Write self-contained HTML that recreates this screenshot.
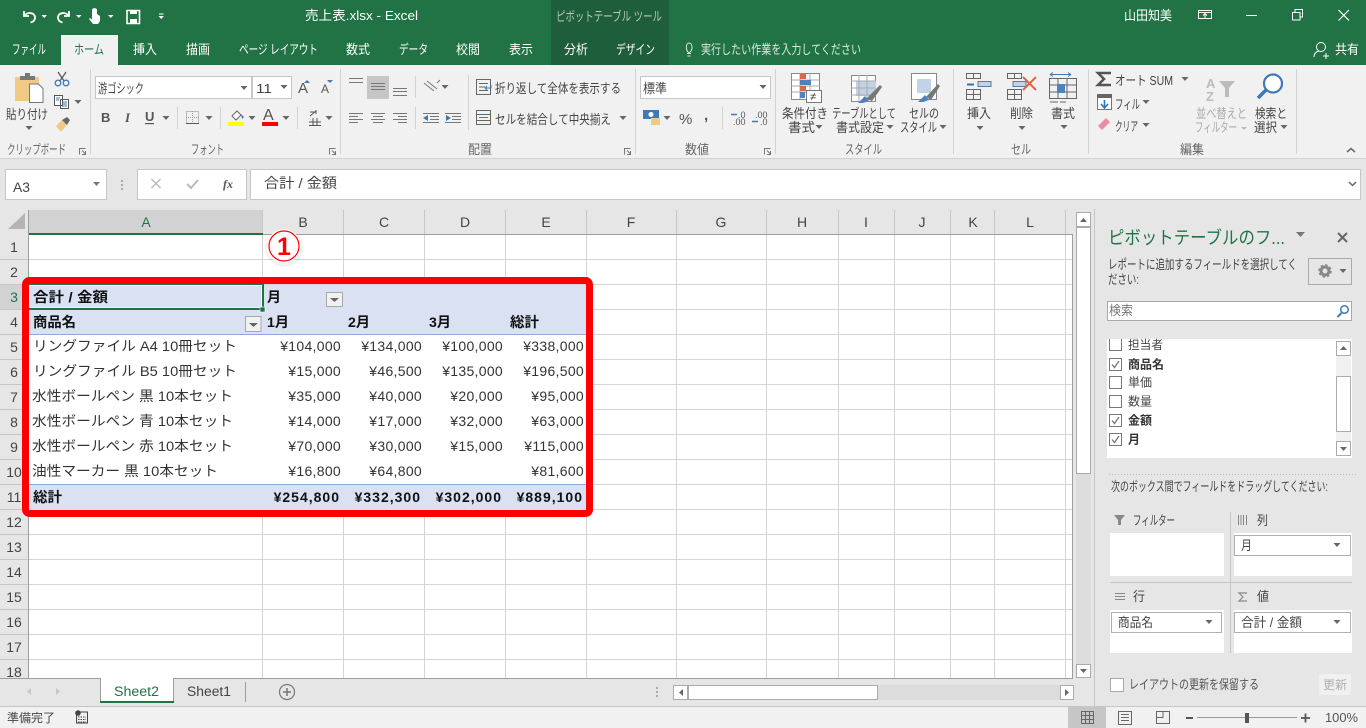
<!DOCTYPE html>
<html lang="ja"><head><meta charset="utf-8"><title>売上表.xlsx - Excel</title>
<style>
html,body{margin:0;padding:0;width:1366px;height:728px;overflow:hidden;background:#e6e6e6}
svg{display:block;font-family:"Liberation Sans","Noto Sans CJK JP",sans-serif;font-size:12px}
.w text{fill:#fff;font-size:13px}
.r text{fill:#444}
.l text{fill:#444;font-size:13px}
.c text{fill:#333;font-size:14px}
.b text{font-weight:700;fill:#111;font-size:14px}
.n text{font-size:14px;fill:#333;text-anchor:end}
.nb text{font-size:14px;fill:#111;font-weight:700;text-anchor:end}
.h text{font-size:14px;fill:#444;text-anchor:middle}
</style></head><body>
<svg width="1366" height="728" viewBox="0 0 1366 728" xmlns="http://www.w3.org/2000/svg">
<defs>
<polygon id="d" points="-3.5,-2 3.500,-2 0,2" fill="#666"/>
<g id="chk"><rect x=".5" y=".5" width="12" height="12" fill="#fff" stroke="#777"/></g>
<g id="chk2"><rect x=".5" y=".5" width="12" height="12" fill="#fff" stroke="#777"/><path d="M3 6.500l2.500 3L10 3" fill="none" stroke="#777" stroke-width="1.300"/></g>
</defs>

<!-- title bar -->
<rect width="1366" height="65" fill="#217346"/>
<rect x="551" width="118" height="65" fill="#1e5e3a"/>
<rect x="61" y="35" width="57" height="30" fill="#f1f1f1"/>
<g fill="none" stroke="#fff" stroke-width="1.800">
<path d="M24 11v5h5M24.500 15.500c3-4 11-3 10.500 2.500-.3 2.500-2 4-4.500 4.500"/>
<path d="M69 11v5h-5M68.500 15.500c-3-4-11-3-10.500 2.500.3 2.500 2 4 4.500 4.500"/>
</g>
<path d="M92 9.500a3 3 0 0 1 5 0v4.500l3 2v5l-2 3h-5l-4-5 1-1 2 1.500z" fill="#fff"/>
<path d="M127 10.500h12.500v13h-12.500z" fill="none" stroke="#fff" stroke-width="1.600"/>
<path d="M130 10h7v4h-7zM130 19h7v5h-7z" fill="#fff"/>
<g fill="#fff"><polygon points="41.500,15 47,15 44.250,18"/><polygon points="76,15 81.500,15 78.750,18"/><polygon points="108,15 113.500,15 110.750,18"/><polygon points="158.500,16 164,16 161.250,19"/><rect x="159" y="13.500" width="4.500" height="1"/></g>
<g class="w">
<text x="305" y="20" textLength="113" lengthAdjust="spacingAndGlyphs">売上表.xlsx  -  Excel</text>
<text x="1124" y="20" textLength="48" lengthAdjust="spacingAndGlyphs">山田知美</text>
<text x="12" y="54" textLength="34" lengthAdjust="spacingAndGlyphs">ファイル</text>
<text x="133" y="54" textLength="24" lengthAdjust="spacingAndGlyphs">挿入</text>
<text x="186" y="54" textLength="24" lengthAdjust="spacingAndGlyphs">描画</text>
<text x="239" y="54" textLength="79" lengthAdjust="spacingAndGlyphs">ページ レイアウト</text>
<text x="346" y="54" textLength="24" lengthAdjust="spacingAndGlyphs">数式</text>
<text x="399" y="54" textLength="29" lengthAdjust="spacingAndGlyphs">データ</text>
<text x="456" y="54" textLength="24" lengthAdjust="spacingAndGlyphs">校閲</text>
<text x="509" y="54" textLength="24" lengthAdjust="spacingAndGlyphs">表示</text>
<text x="564" y="54" textLength="24" lengthAdjust="spacingAndGlyphs">分析</text>
<text x="616" y="54" textLength="39" lengthAdjust="spacingAndGlyphs">デザイン</text>
<text x="701" y="54" style="fill:#dbe8e0" textLength="160" lengthAdjust="spacingAndGlyphs">実行したい作業を入力してください</text>
<text x="1335" y="54" textLength="24" lengthAdjust="spacingAndGlyphs">共有</text>
</g>
<text x="556" y="21" font-size="13" fill="#b4cbbc" textLength="106" lengthAdjust="spacingAndGlyphs">ピボットテーブル ツール</text>
<text x="74" y="54" font-size="13" fill="#217346" textLength="30" lengthAdjust="spacingAndGlyphs">ホーム</text>
<!-- window buttons -->
<g fill="none" stroke="#fff">
<path d="M1198.500 10.500h13v8h-13zM1198.500 12.500h13M1205 18v-4M1203 15.500l2-2 2 2"/>
<path d="M1246 15.500h11"/>
<path d="M1292.500 12.500h7.500v7.500h-7.500zM1295 12v-2.500h7.500v7.500h-2.500"/>
<path d="M1338.500 10l10.500 10.500M1349 10l-10.500 10.500" stroke-width="1.200"/>
<path d="M689 53c-4-3-3-10 0-10 3.500 0 4.500 7 0 10zM687 53.500h4M687.500 56h3" stroke="#dbe8e0"/>
<circle cx="1321" cy="47" r="4.500"/>
<path d="M1314 57c0-4 3-5.500 5-6M1323 56h6M1326 53v6"/>
</g>

<!-- ribbon -->
<rect y="65" width="1366" height="93" fill="#f1f1f1"/>
<rect y="158" width="1366" height="1" fill="#d2d2d2"/>
<rect y="159" width="1366" height="50" fill="#e6e6e6"/>
<g fill="#d2d2d2">
<rect x="90" y="69" width="1" height="85"/><rect x="340" y="69" width="1" height="85"/><rect x="635" y="69" width="1" height="85"/><rect x="775" y="69" width="1" height="85"/><rect x="953" y="69" width="1" height="85"/><rect x="1088" y="69" width="1" height="85"/><rect x="1296" y="69" width="1" height="85"/>
<rect x="177" y="107" width="1" height="22"/><rect x="220" y="107" width="1" height="22"/><rect x="297" y="107" width="1" height="22"/>
<rect x="415" y="76" width="1" height="22"/><rect x="415" y="107" width="1" height="22"/><rect x="468" y="75" width="1" height="55"/><rect x="722" y="107" width="1" height="22"/>
</g>
<!-- clipboard -->
<path d="M15 77h24v24H15z" fill="#f0c987"/>
<path d="M20 76h5v-3h5v3h5v4H20z" fill="#777"/>
<path d="M29.500 84h9l4.500 4.500v14H29.500z" fill="#fff" stroke="#777"/>
<g fill="none" stroke="#555" stroke-width="1.200"><path d="M58 72l6 9M66 72l-6 9"/></g>
<circle cx="58" cy="83" r="2.800" fill="none" stroke="#3f7ab5" stroke-width="1.300"/><circle cx="66" cy="83" r="2.800" fill="none" stroke="#3f7ab5" stroke-width="1.300"/>
<path d="M54.500 95.500h8v10h-8zM60.500 99.500h8v9h-8z" fill="#fff" stroke="#555"/>
<path d="M62 102h5M62 104h5M62 106h5M56 98h4M56 100h3" stroke="#3f7ab5"/>
<path d="M56 126l6-6 5 5-6 7z" fill="#f0c987"/><path d="M62 120l5-3 3 3-3 5z" fill="#666"/>
<use href="#d" x="29" y="128"/><use href="#d" x="78" y="102"/>
<g fill="#fff" stroke="#c6c6c6"><rect x="95.500" y="76.500" width="156" height="22"/><rect x="252.500" y="76.500" width="39" height="22"/><rect x="640.500" y="76.500" width="130" height="22"/></g>
<g class="l">
<text x="6" y="119" textLength="42" lengthAdjust="spacingAndGlyphs">貼り付け</text>
<text x="7" y="154" style="fill:#666" textLength="59" lengthAdjust="spacingAndGlyphs">クリップボード</text>
<text x="98" y="93" textLength="46" lengthAdjust="spacingAndGlyphs">游ゴシック</text>
<text x="256" y="93" textLength="16" lengthAdjust="spacingAndGlyphs">11</text>
<text x="191" y="154" style="fill:#666" textLength="33" lengthAdjust="spacingAndGlyphs">フォント</text>
<text x="495" y="93" textLength="126" lengthAdjust="spacingAndGlyphs">折り返して全体を表示する</text>
<text x="495" y="124" textLength="116" lengthAdjust="spacingAndGlyphs">セルを結合して中央揃え</text>
<text x="468" y="154" style="fill:#666" textLength="24" lengthAdjust="spacingAndGlyphs">配置</text>
<text x="643" y="93" textLength="24" lengthAdjust="spacingAndGlyphs">標準</text>
<text x="685" y="154" style="fill:#666" textLength="24" lengthAdjust="spacingAndGlyphs">数値</text>
<text x="782" y="118" textLength="46" lengthAdjust="spacingAndGlyphs">条件付き</text>
<text x="788" y="132" textLength="27" lengthAdjust="spacingAndGlyphs">書式</text>
<text x="832" y="118" textLength="64" lengthAdjust="spacingAndGlyphs">テーブルとして</text>
<text x="836" y="132" textLength="48" lengthAdjust="spacingAndGlyphs">書式設定</text>
<text x="909" y="118" textLength="30" lengthAdjust="spacingAndGlyphs">セルの</text>
<text x="900" y="132" textLength="37" lengthAdjust="spacingAndGlyphs">スタイル</text>
<text x="845" y="154" style="fill:#666" textLength="37" lengthAdjust="spacingAndGlyphs">スタイル</text>
<text x="967" y="118" textLength="24" lengthAdjust="spacingAndGlyphs">挿入</text>
<text x="1010" y="118" textLength="23" lengthAdjust="spacingAndGlyphs">削除</text>
<text x="1051" y="118" textLength="24" lengthAdjust="spacingAndGlyphs">書式</text>
<text x="1011" y="154" style="fill:#666" textLength="20" lengthAdjust="spacingAndGlyphs">セル</text>
<text x="1115" y="85" textLength="58" lengthAdjust="spacingAndGlyphs">オート SUM</text>
<text x="1115" y="109" textLength="25" lengthAdjust="spacingAndGlyphs">フィル</text>
<text x="1115" y="131" textLength="23" lengthAdjust="spacingAndGlyphs">クリア</text>
<text x="1196" y="118" style="fill:#aaa" textLength="51" lengthAdjust="spacingAndGlyphs">並べ替えと</text>
<text x="1195" y="132" style="fill:#aaa" textLength="42" lengthAdjust="spacingAndGlyphs">フィルター</text>
<text x="1255" y="118" textLength="32" lengthAdjust="spacingAndGlyphs">検索と</text>
<text x="1254" y="132" textLength="23" lengthAdjust="spacingAndGlyphs">選択</text>
<text x="1180" y="154" style="fill:#666" textLength="24" lengthAdjust="spacingAndGlyphs">編集</text>
</g>
<use href="#d" x="244" y="88"/><use href="#d" x="284" y="87"/><use href="#d" x="763" y="87"/>
<!-- launchers -->
<g fill="none" stroke="#777"><path d="M79.500 154.500v-6h6M82 150.500l3.500 3.500M85.500 151v3.500H82" id="lau"/>
<use href="#lau" x="250"/><use href="#lau" x="545"/><use href="#lau" x="685"/></g>
<!-- font controls -->
<g fill="#555" font-family="Liberation Sans">
<text x="298" y="93" font-size="15">A</text><text x="321" y="93" font-size="12">A</text>
<text x="101" y="122" font-size="13" font-weight="700">B</text>
<text x="125" y="122" font-size="13" font-style="italic" font-family="Liberation Serif" font-weight="700">I</text>
<text x="145" y="121" font-size="13" font-weight="700">U</text>
<rect x="145" y="123" width="9" height="1.200"/>
<text x="263" y="120" font-size="16">A</text>
</g>
<polygon points="304,83 310,83 307,80" fill="#3f7ab5"/><polygon points="327,80 333,80 330,83" fill="#3f7ab5"/>
<path d="M186.500 111.500h12v12h-12z" fill="none" stroke="#888" stroke-dasharray="1 1"/><path d="M186 123.500h13M192.500 111v12M186 117.500h13" stroke="#999" stroke-dasharray="1 1"/><path d="M186 123.500h13" stroke="#555"/>
<path d="M232 116l5-5 4 4-5 5z" fill="#fff" stroke="#666"/><path d="M241 114l3 3-2 2z" fill="#3f7ab5"/>
<rect x="228" y="122" width="16" height="4" fill="#ffff00"/><rect x="262" y="122" width="16" height="4" fill="#f00"/>
<path d="M309 125.500h12M309 122h12M313 118v8M317 118v8M310 112h6M316 110v4M310 116l6-5" fill="none" stroke="#555"/>
<use href="#d" x="166" y="118"/><use href="#d" x="209" y="118"/><use href="#d" x="252" y="118"/><use href="#d" x="286" y="118"/><use href="#d" x="329" y="118"/><use href="#d" x="445" y="87"/><use href="#d" x="623" y="118"/><use href="#d" x="667" y="118"/><use href="#d" x="819" y="127"/><use href="#d" x="890" y="127"/><use href="#d" x="943" y="127"/><use href="#d" x="980" y="128"/><use href="#d" x="1022" y="128"/><use href="#d" x="1064" y="127"/><use href="#d" x="1185" y="79"/><use href="#d" x="1146" y="102"/><use href="#d" x="1146" y="125"/><use href="#d" x="1284" y="127"/>
<polygon points="1241,127 1247,127 1244,130" fill="#bbb"/>
<!-- alignment -->
<rect x="367" y="76" width="22" height="23" fill="#c6c6c6"/>
<g fill="none" stroke="#777">
<path d="M349 78.500h14M349 82.500h14M371 83.500h14M371 86.500h14M371 89.500h14M393 88.500h14M393 91.500h14M393 95.500h14"/>
<path d="M349 113.500h14M349 116.500h9M349 119.500h14M349 122.500h9M371 113.500h14M373 116.500h10M371 119.500h14M373 122.500h10M393 113.500h14M398 116.500h9M393 119.500h14M398 122.500h9"/>
<path d="M430 113.500h9M430 116.500h9M430 119.500h9M423 122.500h16M423 113.500h16M452 116.500h9M452 119.500h9M445 113.500h16M445 122.500h16M424 83l10 8M427 81l10 8M437 83l3-3"/>
<path d="M476.500 79.500h14v15h-14zM479 83.500h9M479 87h6M479 90.500h9" stroke="#666"/>
<path d="M476.500 110.500h14v14h-14zM476.500 114.500h14M476.500 120.500h14" stroke="#666"/>
</g>
<path d="M479 117.500h9" stroke="#3f7ab5"/><path d="M486 88h5v-3M487 86l-2 2 2 2" fill="none" stroke="#3f7ab5"/>
<polygon points="423,118 428,115 428,121" fill="#3f7ab5"/><polygon points="451,118 446,115 446,121" fill="#3f7ab5"/>
<!-- number -->
<rect x="643" y="110" width="16" height="9" fill="#3f7ab5"/><circle cx="651" cy="114.500" r="2.500" fill="#fff"/><rect x="651" y="118" width="9" height="7" fill="#f0c987"/>
<g fill="#555" font-family="Liberation Sans">
<text x="679" y="124" font-size="15">%</text>
<text x="704" y="120" font-size="15" font-weight="700">,</text>
<text x="738" y="118" font-size="9">.0</text><text x="733" y="125" font-size="9">.00</text>
<text x="755" y="118" font-size="9">.00</text><text x="760" y="125" font-size="9">.0</text>
</g>
<path d="M731 114.500h6M752 121.500h6" stroke="#3f7ab5" stroke-width="1.500"/>
<!-- styles -->
<path d="M791.500 73.500h28v26h-28z" fill="#fff" stroke="#888"/><path d="M791.500 80h28M791.500 86h28M791.500 92h28M800 73v26M810 73v26" stroke="#aaa"/>
<rect x="800" y="74" width="6" height="5" fill="#e0653f"/><rect x="800" y="80" width="11" height="5" fill="#4f81bd"/><rect x="800" y="86" width="6" height="5" fill="#e0653f"/><rect x="800" y="92" width="5" height="6" fill="#4f81bd"/>
<rect x="806.500" y="90.500" width="15" height="12" fill="#fff" stroke="#777"/><text x="810" y="100" font-size="11" fill="#333">≠</text>
<path d="M851.500 75.500h24v26h-24z" fill="#fff" stroke="#888"/><rect x="856" y="81" width="20" height="15" fill="#c3d3e7"/><path d="M851 81h25M851 88h25M851 95h25M859 75v27M867 75v27" stroke="#aaa"/>
<path d="M866 99l14-14 2 2-10 14z" fill="#777"/><path d="M865 96l4 5-6 2h-5z" fill="#4f81bd"/>
<path d="M911.500 73.500h25v26h-25z" fill="#fff" stroke="#888"/><rect x="917" y="79" width="14" height="14" fill="#c3d3e7"/>
<path d="M926 97l12-13 2 2-9 14z" fill="#777"/><path d="M925 95l4 5-6 2h-5z" fill="#4f81bd"/>
<!-- cells -->
<g fill="none" stroke="#666">
<path d="M966.500 73.500h14v5h-14zM973.500 73.500v5M966.500 89.500h14v10h-14zM966.500 94.500h14M973.500 89.500v10"/>
<path d="M1007.500 73.500h14v5h-14zM1014.500 73.500v5M1007.500 89.500h14v10h-14zM1007.500 94.500h14M1014.500 89.500v10"/>
<path d="M1049.500 78.500h27v20h-27zM1049.500 85h27M1049.500 92h27M1058 78v20M1067 78v20M1050 102h8M1060 102h6"/>
</g>
<rect x="978" y="81.500" width="13" height="5" fill="#c3d3e7" stroke="#5a7aa0"/><rect x="967" y="83.500" width="7" height="2" fill="#2e75b6"/>
<rect x="1013" y="81.500" width="13" height="5" fill="#c3d3e7" stroke="#5a7aa0"/><path d="M1023 77l13 13M1036 77l-13 13" stroke="#e0653f" stroke-width="2"/>
<rect x="1057" y="84" width="8" height="9" fill="#4f81bd"/><path d="M1050 74.500h21M1050 74.500l3-2M1050 74.500l3 2M1071 74.500l-3-2M1071 74.500l-3 2" stroke="#3f7ab5" fill="none"/>
<!-- edit -->
<path d="M1111 73h-13l6 6-6 6h13" fill="none" stroke="#555" stroke-width="2.500"/>
<path d="M1097.500 94.500h14v15h-14z" fill="#fff" stroke="#777"/><rect x="1097" y="94" width="15" height="4" fill="#666"/><path d="M1104.500 100v7M1101 104l3.500 4 3.500-4" fill="none" stroke="#2e75b6" stroke-width="1.600"/>
<path d="M1098 126l8-8 4 4-8 8z" fill="#e88da0"/>
<g font-family="Liberation Sans" font-weight="700" fill="#bbb"><text x="1206" y="88" font-size="13">A</text><text x="1206" y="101" font-size="13">Z</text></g>
<path d="M1219 81h16l-6 7v9h-4v-9z" fill="#bbb"/>
<circle cx="1273" cy="83.500" r="9" fill="#fff" stroke="#3f7ab5" stroke-width="2.200"/><path d="M1266 90l-8 8" stroke="#3f7ab5" stroke-width="3.500"/>
<path d="M1347 152l4-3.500 4 3.500" fill="none" stroke="#666" stroke-width="1.500"/>

<!-- formula bar -->
<g fill="#fff" stroke="#c6c6c6"><rect x="5.500" y="169.500" width="101" height="30"/><rect x="137.500" y="169.500" width="109" height="30"/><rect x="250.500" y="169.500" width="1110" height="30"/></g>
<text x="13" y="192" font-size="14" fill="#444" textLength="17" lengthAdjust="spacingAndGlyphs">A3</text>
<polygon points="93,182 100,182 96.500,186" fill="#777"/>
<g fill="#aaa"><rect x="121" y="180" width="2" height="2"/><rect x="121" y="184" width="2" height="2"/><rect x="121" y="188" width="2" height="2"/></g>
<path d="M151.500 179l9 9M160.500 179l-9 9" stroke="#bbb" stroke-width="1.500"/>
<path d="M187 184l4 4 7-8" fill="none" stroke="#bbb" stroke-width="2"/>
<text x="223" y="188" font-family="Liberation Serif" font-style="italic" font-weight="700" font-size="12" fill="#555">fx</text>
<text x="264" y="188" font-size="14" fill="#444" textLength="73" lengthAdjust="spacingAndGlyphs">合計 / 金額</text>
<path d="M1349 182l3.500 3.500 3.500-3.500" fill="none" stroke="#666" stroke-width="1.500"/>

<!-- grid -->
<rect y="209" width="1095" height="470" fill="#e6e6e6"/>
<rect x="29" y="235" width="1044" height="443" fill="#fff"/>
<rect x="29" y="210" width="234" height="23" fill="#d2d2d2"/>
<rect x="0" y="285" width="28" height="25" fill="#d2d2d2"/>
<polygon points="8,229 25,229 25,213" fill="#b4b4b4"/>
<path d="M29 259.500H1072M29 284.500H1072M29 309.500H1072M29 334.500H1072M29 359.500H1072M29 384.500H1072M29 409.500H1072M29 434.500H1072M29 459.500H1072M29 484.500H1072M29 509.500H1072M29 534.500H1072M29 559.500H1072M29 584.500H1072M29 609.500H1072M29 634.500H1072M29 659.500H1072" stroke="#d4d4d4"/>
<path d="M262.500 235V678M343.500 235V678M424.500 235V678M505.500 235V678M586.500 235V678M676.500 235V678M766.500 235V678M838.500 235V678M894.500 235V678M950.500 235V678M994.500 235V678M1065.500 235V678" stroke="#d4d4d4"/>
<path d="M262.500 210v24M343.500 210v24M424.500 210v24M505.500 210v24M586.500 210v24M676.500 210v24M766.500 210v24M838.500 210v24M894.500 210v24M950.500 210v24M994.500 210v24M1065.500 210v24" stroke="#c6c6c6"/>
<path d="M0 259.500h28M0 284.500h28M0 309.500h28M0 334.500h28M0 359.500h28M0 384.500h28M0 409.500h28M0 434.500h28M0 459.500h28M0 484.500h28M0 509.500h28M0 534.500h28M0 559.500h28M0 584.500h28M0 609.500h28M0 634.500h28M0 659.500h28" stroke="#c6c6c6"/>
<rect x="28" y="210" width="1" height="468" fill="#9e9e9e"/>
<rect x="29" y="234" width="1044" height="1" fill="#9e9e9e"/>
<rect x="1072" y="234" width="1" height="445" fill="#9e9e9e"/>
<rect y="678" width="1073" height="1" fill="#9e9e9e"/>
<rect x="29" y="233" width="234" height="2" fill="#217346"/>
<g class="h">
<text x="146" y="227" style="fill:#217346">A</text><text x="303" y="227">B</text><text x="384" y="227">C</text><text x="465" y="227">D</text><text x="546" y="227">E</text><text x="631" y="227">F</text><text x="721" y="227">G</text><text x="802" y="227">H</text><text x="866" y="227">I</text><text x="922" y="227">J</text><text x="973" y="227">K</text><text x="1030" y="227">L</text>
<text x="14" y="252">1</text><text x="14" y="277">2</text><text x="14" y="302" style="fill:#217346">3</text><text x="14" y="327">4</text><text x="14" y="352">5</text><text x="14" y="377">6</text><text x="14" y="402">7</text><text x="14" y="427">8</text><text x="14" y="452">9</text><text x="14" y="477">10</text><text x="14" y="502">11</text><text x="14" y="527">12</text><text x="14" y="552">13</text><text x="14" y="577">14</text><text x="14" y="602">15</text><text x="14" y="627">16</text><text x="14" y="652">17</text><text x="14" y="677">18</text>
</g>

<!-- pivot -->
<rect x="29" y="335" width="558" height="150" fill="#fff"/>
<rect x="29" y="285" width="558" height="49" fill="#d9e1f2"/>
<rect x="29" y="485" width="558" height="25" fill="#d9e1f2"/>
<rect x="29" y="334" width="558" height="1" fill="#8ea9db"/>
<rect x="29" y="484" width="558" height="1" fill="#8ea9db"/>
<g fill="none"><rect x="30" y="285.500" width="231.500" height="22.500" stroke="#fff"/></g>
<rect x="29" y="284" width="234" height="1" fill="#217346"/>
<rect x="29" y="308" width="235" height="2" fill="#217346"/>
<rect x="262" y="284" width="2" height="26" fill="#217346"/>
<rect x="260" y="307" width="5" height="5" fill="#217346" stroke="#fff" stroke-width=".6"/>
<g class="b">
<text x="33" y="302" textLength="75" lengthAdjust="spacingAndGlyphs">合計 / 金額</text>
<text x="267" y="302" textLength="14" lengthAdjust="spacingAndGlyphs">月</text>
<text x="33" y="327" textLength="43" lengthAdjust="spacingAndGlyphs">商品名</text>
<text x="267" y="327" textLength="22" lengthAdjust="spacingAndGlyphs">1月</text>
<text x="348" y="327" textLength="22" lengthAdjust="spacingAndGlyphs">2月</text>
<text x="429" y="327" textLength="22" lengthAdjust="spacingAndGlyphs">3月</text>
<text x="510" y="327" textLength="29" lengthAdjust="spacingAndGlyphs">総計</text>
<text x="33" y="502" textLength="29" lengthAdjust="spacingAndGlyphs">総計</text>
</g>
<g fill="#f1f1f1" stroke="#a8a8a8"><rect x="326.500" y="292.500" width="16" height="14"/><rect x="245.500" y="316.500" width="15.500" height="15"/></g>
<polygon points="330,298 339,298 334.500,302" fill="#666"/><polygon points="249,323 258,323 253.500,327" fill="#666"/>
<g class="c">
<text x="33" y="351" textLength="204" lengthAdjust="spacingAndGlyphs">リングファイル A4 10冊セット</text>
<text x="33" y="376" textLength="204" lengthAdjust="spacingAndGlyphs">リングファイル B5 10冊セット</text>
<text x="32" y="401" textLength="201" lengthAdjust="spacingAndGlyphs">水性ボールペン 黒 10本セット</text>
<text x="32" y="426" textLength="201" lengthAdjust="spacingAndGlyphs">水性ボールペン 青 10本セット</text>
<text x="32" y="451" textLength="201" lengthAdjust="spacingAndGlyphs">水性ボールペン 赤 10本セット</text>
<text x="32" y="476" textLength="186" lengthAdjust="spacingAndGlyphs">油性マーカー 黒 10本セット</text>
</g>
<g class="n" letter-spacing=".3">
<text x="341" y="351">¥104,000</text><text x="422" y="351">¥134,000</text><text x="503" y="351">¥100,000</text><text x="584" y="351">¥338,000</text>
<text x="341" y="376">¥15,000</text><text x="422" y="376">¥46,500</text><text x="503" y="376">¥135,000</text><text x="584" y="376">¥196,500</text>
<text x="341" y="401">¥35,000</text><text x="422" y="401">¥40,000</text><text x="503" y="401">¥20,000</text><text x="584" y="401">¥95,000</text>
<text x="341" y="426">¥14,000</text><text x="422" y="426">¥17,000</text><text x="503" y="426">¥32,000</text><text x="584" y="426">¥63,000</text>
<text x="341" y="451">¥70,000</text><text x="422" y="451">¥30,000</text><text x="503" y="451">¥15,000</text><text x="584" y="451">¥115,000</text>
<text x="341" y="476">¥16,800</text><text x="422" y="476">¥64,800</text><text x="584" y="476">¥81,600</text>
</g>
<g class="nb" letter-spacing="1">
<text x="340" y="502">¥254,800</text><text x="421" y="502">¥332,300</text><text x="502" y="502">¥302,000</text><text x="583" y="502">¥889,100</text>
</g>
<rect x="25.500" y="280.500" width="564" height="233" rx="4" fill="none" stroke="#ff0000" stroke-width="7"/>
<circle cx="284.500" cy="248" r="19" fill="#000" opacity=".05"/>
<circle cx="284" cy="246" r="17" fill="#fff"/>
<circle cx="284" cy="246" r="15" fill="#fff" stroke="#f00" stroke-width="1.200"/>
<text x="284" y="255" text-anchor="middle" font-size="25" font-weight="700" fill="#f00">1</text>

<!-- vertical scrollbar -->
<rect x="1076" y="212" width="15" height="466" fill="#dcdcdc"/>
<g fill="#fff" stroke="#ababab"><rect x="1076.500" y="212.500" width="14" height="14"/><rect x="1076.500" y="227.500" width="14" height="246"/><rect x="1076.500" y="664.500" width="14" height="13"/></g>
<polygon points="1080,222 1087,222 1083.500,218" fill="#666"/><polygon points="1080,669 1087,669 1083.500,673" fill="#666"/>
<rect x="1094" y="209" width="1" height="497" fill="#c6c6c6"/>

<!-- sheet tabs -->
<rect y="679" width="1094" height="27" fill="#e6e6e6"/>
<path d="M100.500 678v24M173.500 678v24" stroke="#9e9e9e"/>
<rect x="101" y="678" width="72" height="24" fill="#fff"/>
<rect x="100" y="701" width="74" height="2" fill="#217346"/>
<path d="M245.500 682v20" stroke="#9e9e9e"/>
<text x="114" y="696" font-size="13.500" fill="#217346" textLength="45" lengthAdjust="spacingAndGlyphs">Sheet2</text>
<text x="187" y="696" font-size="13.500" fill="#444" textLength="44" lengthAdjust="spacingAndGlyphs">Sheet1</text>
<polygon points="31,688 31,695 27,691.500" fill="#c6c6c6"/><polygon points="56,688 56,695 60,691.500" fill="#c6c6c6"/>
<circle cx="287" cy="692" r="7.500" fill="none" stroke="#777" stroke-width="1.200"/><path d="M283 692h8M287 688v8" stroke="#777" stroke-width="1.500"/>
<g fill="#aaa"><rect x="656" y="687" width="2" height="2"/><rect x="656" y="691" width="2" height="2"/><rect x="656" y="695" width="2" height="2"/></g>
<rect x="673" y="685" width="401" height="15" fill="#dcdcdc"/>
<g fill="#fff" stroke="#ababab"><rect x="673.500" y="685.500" width="14" height="14"/><rect x="688.500" y="685.500" width="189" height="14"/><rect x="1060.500" y="685.500" width="13" height="14"/></g>
<polygon points="683,689 683,696 679,692.500" fill="#666"/><polygon points="1065,689 1065,696 1069,692.500" fill="#666"/>

<!-- status -->
<rect y="706" width="1366" height="22" fill="#f1f1f1"/>
<rect y="706" width="1366" height="1" fill="#c6c6c6"/>
<text x="7" y="722" fill="#444" textLength="48" lengthAdjust="spacingAndGlyphs">準備完了</text>
<circle cx="78" cy="713" r="2.800" fill="#444"/><path d="M79 712h8.500v11h-11v-8" fill="none" stroke="#444"/><path d="M78 717h8M78 719.500h8M78 722h8" stroke="#444" stroke-dasharray="1.500 1"/>
<rect x="1068" y="707" width="38" height="21" fill="#c6c6c6"/>
<path d="M1081.500 711.500h12v12h-12zM1081.500 715.500h12M1081.500 719.500h12M1085.500 711.500v12M1089.500 711.500v12" fill="none" stroke="#666"/>
<path d="M1118.500 711.500h13v13h-13zM1121 714.500h8M1121 717.500h8M1121 720.500h8" fill="none" stroke="#666"/>
<path d="M1156.500 711.500h13v12h-13zM1163 711.500v6h-6.500" fill="none" stroke="#666"/>
<rect x="1186" y="717" width="7" height="2" fill="#555"/>
<rect x="1197" y="717" width="100" height="1" fill="#999"/>
<rect x="1245" y="713" width="4" height="10" fill="#555"/>
<path d="M1301 718h9M1305.500 713.500v9" stroke="#555" stroke-width="1.800"/>
<text x="1325" y="722" fill="#555" font-size="13" textLength="33" lengthAdjust="spacingAndGlyphs">100%</text>

<!-- pivot pane -->
<text x="1108" y="244" font-size="18" fill="#217346" textLength="177" lengthAdjust="spacingAndGlyphs">ピボットテーブルのフ...</text>
<polygon points="1296,232 1305,232 1300.500,237" fill="#777"/>
<path d="M1338 233l9 9M1347 233l-9 9" stroke="#666" stroke-width="2"/>
<g class="l">
<text x="1108" y="269" textLength="189" lengthAdjust="spacingAndGlyphs">レポートに追加するフィールドを選択してく</text>
<text x="1108" y="284" textLength="31" lengthAdjust="spacingAndGlyphs">ださい:</text>
</g>
<rect x="1308.500" y="258.500" width="43" height="26" fill="#e6e6e6" stroke="#aaa"/>
<circle cx="1325" cy="271" r="4" fill="none" stroke="#888" stroke-width="3"/><circle cx="1325" cy="271" r="6" fill="none" stroke="#888" stroke-width="1.500" stroke-dasharray="2.500 2.200"/>
<use href="#d" x="1343" y="271"/>
<rect x="1107.500" y="301.500" width="244" height="19" fill="#fff" stroke="#aaa"/>
<text x="1109" y="315" font-size="13" fill="#777" textLength="24" lengthAdjust="spacingAndGlyphs">検索</text>
<circle cx="1344.500" cy="309.500" r="3.800" fill="#fff" stroke="#3f7ab5" stroke-width="1.500"/><path d="M1341.500 313l-4 4" stroke="#3f7ab5" stroke-width="2"/>
<rect x="1107" y="339" width="245" height="119" fill="#fff"/>
<rect x="1336" y="341" width="15" height="115" fill="#f0f0f0"/>
<g fill="#fff" stroke="#ababab"><rect x="1336.500" y="341.500" width="14" height="14"/><rect x="1336.500" y="376.500" width="14" height="55"/><rect x="1336.500" y="441.500" width="14" height="14"/></g>
<polygon points="1340,350 1347,350 1343.500,346" fill="#666"/><polygon points="1340,447 1347,447 1343.500,451" fill="#666"/>
<use href="#chk" x="1109" y="338"/>
<rect x="1107" y="333" width="245" height="6" fill="#e6e6e6"/>
<use href="#chk2" x="1109" y="358"/><use href="#chk" x="1109" y="376"/><use href="#chk" x="1109" y="395"/><use href="#chk2" x="1109" y="414"/><use href="#chk2" x="1109" y="433"/>
<g class="r">
<text x="1128" y="349" textLength="35" lengthAdjust="spacingAndGlyphs">担当者</text>
<text x="1128" y="368.500" font-weight="700" textLength="36" lengthAdjust="spacingAndGlyphs" style="fill:#333">商品名</text>
<text x="1128" y="386.500" textLength="24" lengthAdjust="spacingAndGlyphs">単価</text>
<text x="1128" y="405.500" textLength="24" lengthAdjust="spacingAndGlyphs">数量</text>
<text x="1128" y="424.500" font-weight="700" textLength="24" lengthAdjust="spacingAndGlyphs" style="fill:#333">金額</text>
<text x="1128" y="443.500" font-weight="700" textLength="12" lengthAdjust="spacingAndGlyphs" style="fill:#333">月</text>
</g>
<path d="M1109 474.500h247" stroke="#bbb" stroke-dasharray="1 2"/>
<g class="l">
<text x="1111" y="491" textLength="217" lengthAdjust="spacingAndGlyphs">次のボックス間でフィールドをドラッグしてください:</text>
<text x="1133" y="525" textLength="42" lengthAdjust="spacingAndGlyphs">フィルター</text>
<text x="1257" y="525" textLength="11" lengthAdjust="spacingAndGlyphs">列</text>
<text x="1133" y="601" textLength="12" lengthAdjust="spacingAndGlyphs">行</text>
<text x="1257" y="601" textLength="12" lengthAdjust="spacingAndGlyphs">値</text>
</g>
<path d="M1114 515h11l-4 5v5h-3v-5z" fill="#888"/>
<path d="M1238.500 515v10M1241 515v10M1243.500 515v10M1246.500 515v10" stroke="#888"/>
<path d="M1115 593.500h10M1115 596.500h10M1115 599.500h10" stroke="#888"/>
<path d="M1247 593h-8l4 4-4 4h8" fill="none" stroke="#888" stroke-width="1.200"/>
<g fill="#fff"><rect x="1110" y="533" width="114" height="43"/><rect x="1234" y="533" width="118" height="43"/><rect x="1110" y="610" width="114" height="43"/><rect x="1234" y="610" width="118" height="43"/></g>
<rect x="1230" y="512" width="1" height="141" fill="#c6c6c6"/><rect x="1110" y="582" width="242" height="1" fill="#c6c6c6"/>
<g fill="#fff" stroke="#b0b0b0"><rect x="1234.500" y="535.500" width="116" height="20"/><rect x="1111.500" y="612.500" width="110" height="20"/><rect x="1234.500" y="612.500" width="116" height="20"/></g>
<g class="l">
<text x="1241" y="550" textLength="11" lengthAdjust="spacingAndGlyphs">月</text>
<text x="1118" y="627" textLength="35" lengthAdjust="spacingAndGlyphs">商品名</text>
<text x="1241" y="627" textLength="61" lengthAdjust="spacingAndGlyphs">合計 / 金額</text>
</g>
<use href="#d" x="1337" y="545"/><use href="#d" x="1209" y="622"/><use href="#d" x="1337" y="622"/>
<rect x="1110.500" y="678.500" width="13" height="13" fill="#fff" stroke="#aaa"/>
<text x="1129" y="689" font-size="13" fill="#555" textLength="130" lengthAdjust="spacingAndGlyphs">レイアウトの更新を保留する</text>
<rect x="1319" y="674" width="32" height="21" fill="#f0f0f0"/>
<text x="1323" y="689" fill="#b0b0b0" textLength="24" lengthAdjust="spacingAndGlyphs">更新</text>
</svg>
</body></html>
